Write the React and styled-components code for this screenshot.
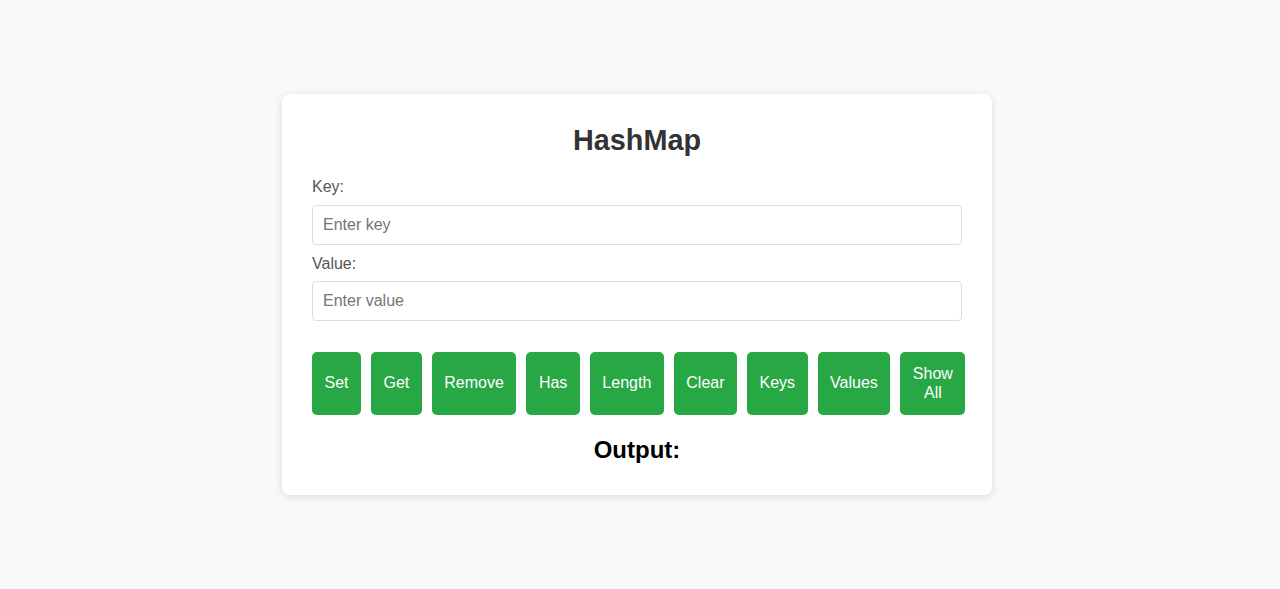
import React, { useState } from 'react';
import styled, { createGlobalStyle } from 'styled-components';

const GlobalStyle = createGlobalStyle`
  html, body {
    margin: 0;
    padding: 0;
    background: #f9f9f9;
    font-family: "Liberation Sans", Arial, sans-serif;
    line-height: 1.15;
  }
`;

const Page = styled.div`
  min-height: 100vh;
  display: flex;
  justify-content: center;
  align-items: center;
  padding-right: 6px;
  box-sizing: border-box;
`;

const Card = styled.div`
  width: 710px;
  box-sizing: border-box;
  padding: 30px 30px 31px;
  background: #fff;
  border-radius: 8px;
  box-shadow: 0 2px 8px rgba(0, 0, 0, 0.12);
`;

const Title = styled.h2`
  margin: 0 0 21px;
  text-align: center;
  font-size: 28.8px;
  font-weight: bold;
  color: #333;
`;

const Label = styled.label`
  display: block;
  margin-bottom: 8px;
  font-size: 16px;
  color: #555;
`;

const Input = styled.input`
  display: block;
  width: 100%;
  box-sizing: border-box;
  height: 40px;
  padding: 10px;
  margin-bottom: 10px;
  border: 1px solid #ddd;
  border-radius: 4px;
  font-family: inherit;
  font-size: 16px;
  color: #333;

  &::placeholder {
    color: #757575;
  }
`;

const ButtonRow = styled.div`
  display: flex;
  gap: 10px;
  margin-top: 31px;
`;

const Button = styled.button`
  flex: 0 1 auto;
  padding: 13px 12.5px;
  border: none;
  border-radius: 5px;
  background: #28a745;
  color: #fff;
  font-family: inherit;
  font-size: 16px;
  line-height: 1.15;
  cursor: pointer;
`;

const Output = styled.h3`
  margin: 21px 0 0;
  text-align: center;
  font-size: 24px;
  font-weight: bold;
  color: #000;
`;

const actions = ['Set', 'Get', 'Remove', 'Has', 'Length', 'Clear', 'Keys', 'Values', 'Show All'];

const App = () => {
  const [key, setKey] = useState('');
  const [value, setValue] = useState('');

  return (
    <Page>
      <GlobalStyle />
      <Card>
        <Title>HashMap</Title>
        <Label htmlFor="key">Key:</Label>
        <Input id="key" placeholder="Enter key" value={key} onChange={e => setKey(e.target.value)} />
        <Label htmlFor="value">Value:</Label>
        <Input id="value" placeholder="Enter value" value={value} onChange={e => setValue(e.target.value)} />
        <ButtonRow>
          {actions.map(a => (
            <Button key={a}>{a}</Button>
          ))}
        </ButtonRow>
        <Output>Output:</Output>
      </Card>
    </Page>
  );
};

export default App;
